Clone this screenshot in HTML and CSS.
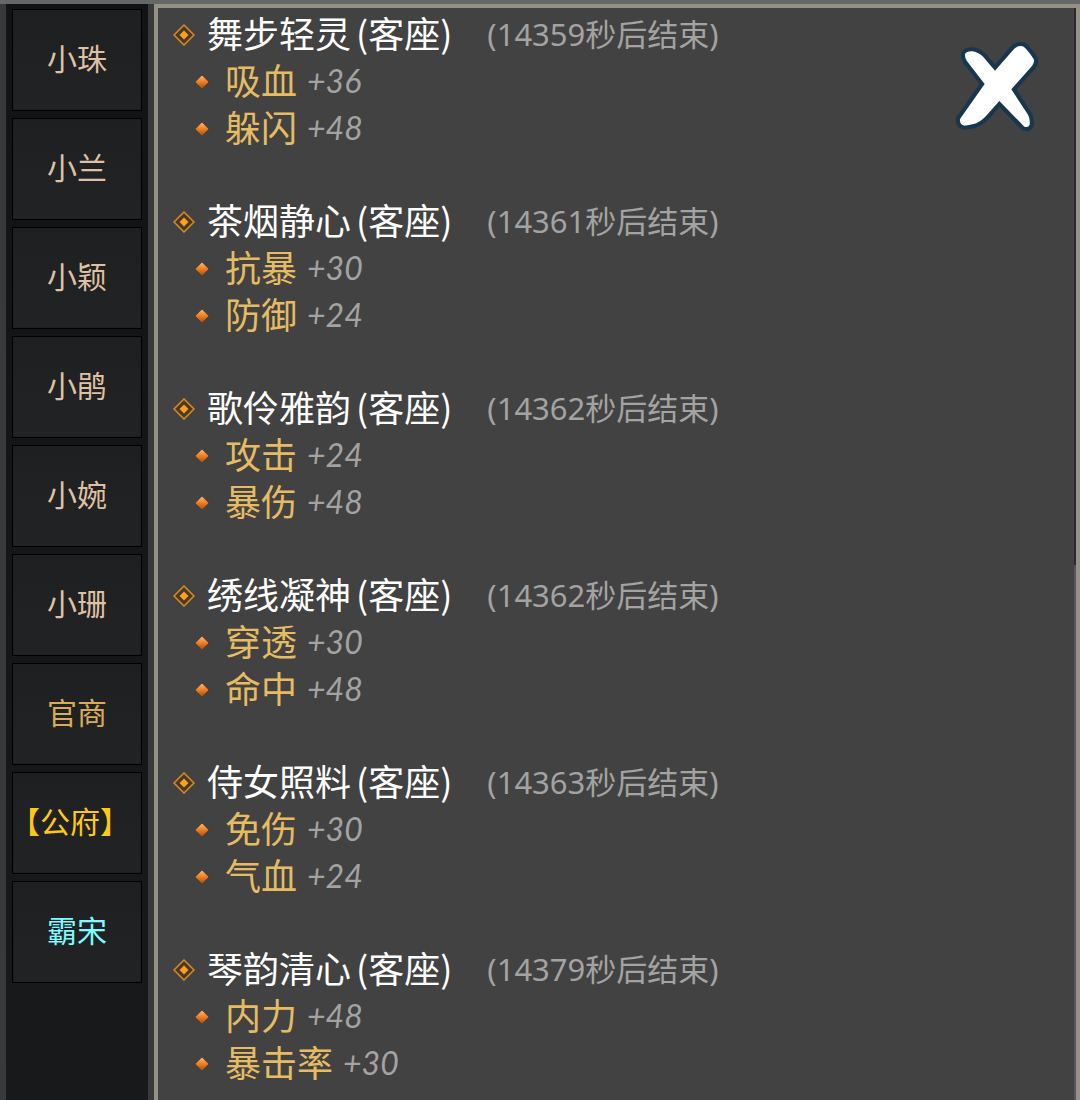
FILE: index.html
```html
<!DOCTYPE html>
<html lang="zh-CN">
<head>
    <meta charset="UTF-8">
    <meta name="viewport" content="width=device-width, initial-scale=1.0">
    <title>公府</title>
    <link rel="stylesheet" href="styles.css">
</head>
<body>
    <svg class="defs" aria-hidden="true">
        <defs>
            <linearGradient id="orange" x1="0" y1="0" x2="0" y2="1">
                <stop offset="0" stop-color="#ffb066"/>
                <stop offset="0.45" stop-color="#f58220"/>
                <stop offset="1" stop-color="#b9560f"/>
            </linearGradient>
            <symbol id="mark" viewBox="0 0 22 22">
                <path d="M11 1 21 11 11 21 1 11Z" fill="#493a27" stroke="#d98b22" stroke-width="1.5"/>
                <path d="M11 6.5 15.500 11 11 15.500 6.500 11Z" fill="#ff9d1c"/>
            </symbol>
            <symbol id="dot" viewBox="0 0 14 14">
                <path d="M7 1.500 12.500 7 7 12.500 1.500 7Z" fill="url(#orange)" stroke="url(#orange)" stroke-width="1.5" stroke-linejoin="round"/>
            </symbol>
        </defs>
    </svg>

    <div class="window">
        <nav class="sidebar">
            <button type="button">小珠</button>
            <button type="button">小兰</button>
            <button type="button">小颖</button>
            <button type="button">小鹃</button>
            <button type="button">小婉</button>
            <button type="button">小珊</button>
            <button type="button" class="merchant">官商</button>
            <button type="button" class="active">【公府】</button>
            <button type="button" class="server">霸宋</button>
        </nav>

        <main class="panel">
            <div class="buffs">
                <section class="buff">
                    <h2><svg class="mark"><use href="#mark"/></svg>舞步轻灵<span class="guest">(客座)</span><small>(14359秒后结束)</small></h2>
                    <ul>
                        <li><svg class="dot"><use href="#dot"/></svg>吸血<em>+36</em></li>
                        <li><svg class="dot"><use href="#dot"/></svg>躲闪<em>+48</em></li>
                    </ul>
                </section>
                <section class="buff">
                    <h2><svg class="mark"><use href="#mark"/></svg>茶烟静心<span class="guest">(客座)</span><small>(14361秒后结束)</small></h2>
                    <ul>
                        <li><svg class="dot"><use href="#dot"/></svg>抗暴<em>+30</em></li>
                        <li><svg class="dot"><use href="#dot"/></svg>防御<em>+24</em></li>
                    </ul>
                </section>
                <section class="buff">
                    <h2><svg class="mark"><use href="#mark"/></svg>歌伶雅韵<span class="guest">(客座)</span><small>(14362秒后结束)</small></h2>
                    <ul>
                        <li><svg class="dot"><use href="#dot"/></svg>攻击<em>+24</em></li>
                        <li><svg class="dot"><use href="#dot"/></svg>暴伤<em>+48</em></li>
                    </ul>
                </section>
                <section class="buff">
                    <h2><svg class="mark"><use href="#mark"/></svg>绣线凝神<span class="guest">(客座)</span><small>(14362秒后结束)</small></h2>
                    <ul>
                        <li><svg class="dot"><use href="#dot"/></svg>穿透<em>+30</em></li>
                        <li><svg class="dot"><use href="#dot"/></svg>命中<em>+48</em></li>
                    </ul>
                </section>
                <section class="buff">
                    <h2><svg class="mark"><use href="#mark"/></svg>侍女照料<span class="guest">(客座)</span><small>(14363秒后结束)</small></h2>
                    <ul>
                        <li><svg class="dot"><use href="#dot"/></svg>免伤<em>+30</em></li>
                        <li><svg class="dot"><use href="#dot"/></svg>气血<em>+24</em></li>
                    </ul>
                </section>
                <section class="buff">
                    <h2><svg class="mark"><use href="#mark"/></svg>琴韵清心<span class="guest">(客座)</span><small>(14379秒后结束)</small></h2>
                    <ul>
                        <li><svg class="dot"><use href="#dot"/></svg>内力<em>+48</em></li>
                        <li><svg class="dot"><use href="#dot"/></svg>暴击率<em>+30</em></li>
                    </ul>
                </section>
            </div>
            <div class="scrollbar"></div>
            <button type="button" class="close" aria-label="关闭">
                <svg viewBox="48 120 252 282">
                    <path d="M75 162Q80 153 98 154Q116 157 130 171L165 212 222 147Q233 136 248 139Q258 143 281 177Q285 186 276 198L214 268 264 344Q271 356 269 374Q265 384 253 380L178 303 138 348Q120 368 98 373L74 377Q58 374 60 357L134 252 80 182Q74 172 75 162Z" fill="#fff" stroke="#19374c" stroke-width="25" stroke-linejoin="round" paint-order="stroke"/>
                </svg>
            </button>
        </main>
    </div>
</body>
</html>
```
FILE: styles.css
```css
* {
    box-sizing: border-box;
}
body {
    margin: 0;
    background: #323436;
    font-family: "Noto Sans", "Noto Sans CJK SC", sans-serif;
}
.defs {
    position: absolute;
    width: 0;
    height: 0;
}
.window {
    display: flex;
    min-height: 100vh;
    border-top: 4px solid #646867;
}

/* Menu lateral */
.sidebar {
    display: flex;
    flex-direction: column;
    gap: 7px;
    flex: none;
    width: 154px;
    padding: 5px 6px 0;
    border: solid #37393b;
    border-width: 0 6px;
    background: linear-gradient(#111314, #18191a);
}
.sidebar button {
    flex: none;
    height: 102px;
    padding: 0 0 6px;
    border: 1px solid #000;
    outline: 1px solid #1d1f20;
    outline-offset: -2px;
    background: linear-gradient(#1d1f20, #222324);
    color: #dfc0a4;
    font: 30px/40px "Noto Sans CJK SC", sans-serif;
    white-space: nowrap;
    cursor: pointer;
}
.sidebar .merchant {
    color: #d9ab58;
}
.sidebar .active {
    display: flex;
    align-items: center;
    justify-content: center;
    padding-right: 14px;
    color: #ffc90e;
}
.sidebar .server {
    color: #7ffaff;
}

/* Panel */
.panel {
    position: relative;
    display: flex;
    flex: 1;
    min-width: 0;
    border: solid #959184;
    border-width: 4px 4px 0;
    background: #424242;
}
.buffs {
    flex: 1;
    padding: 3px 0 0 15px;
}
.buff + .buff {
    margin-top: 46px;
}
.buff h2,
.buff li {
    display: flex;
    align-items: center;
    height: 47px;
    margin: 0;
    padding-bottom: 6px;
    font: 36px/40px "Noto Sans CJK SC", sans-serif;
    white-space: nowrap;
}
.buff h2 {
    color: #fff;
}
.buff li {
    color: #e5bc62;
}
.buff ul {
    margin: 0;
    padding: 0 0 0 22px;
    list-style: none;
}
.mark,
.dot {
    margin-top: 6px;
}
.mark {
    width: 22px;
    height: 22px;
    margin-right: 12px;
}
.dot {
    width: 14px;
    height: 14px;
    margin-right: 16px;
}
.guest {
    margin-left: 5px;
}
.buff small {
    margin: 4px 0 0 35px;
    color: #a3a3a3;
    font: 31px/40px "Noto Sans", "Noto Sans CJK SC", sans-serif;
}
.buff em {
    margin: 4px 0 0 10px;
    color: #a3a3a3;
    font: italic 32px/40px Lato, sans-serif;
}
.scrollbar {
    width: 2px;
    background: linear-gradient(#2d2a2a 51%, #555 51%);
}
.close {
    position: absolute;
    top: 32px;
    right: 36px;
    width: 84px;
    height: 94px;
    padding: 0;
    border: none;
    background: none;
    cursor: pointer;
}
.close svg {
    display: block;
    width: 100%;
    height: 100%;
    overflow: visible;
}
```
